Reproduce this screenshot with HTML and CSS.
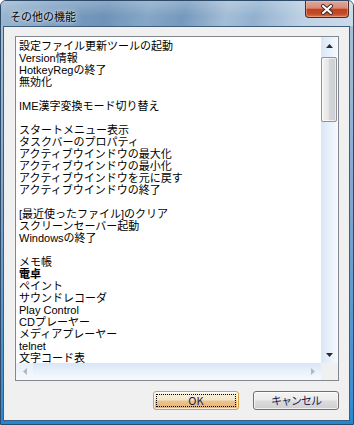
FILE: index.html
```html
<!DOCTYPE html>
<html lang="ja">
<head>
    <meta charset="UTF-8">
    <meta name="viewport" content="width=device-width, initial-scale=1.0">
    <title>その他の機能</title>
    <link rel="stylesheet" href="styles.css">
</head>
<body>
    <div class="window">
        <div class="titlebar">
            <span class="title">その他の機能</span>
            <div class="close-btn">
                <svg width="14" height="11" viewBox="0 0 14 11">
                    <path d="M3 2 L11 9 M11 2 L3 9" stroke="#3a2a2a" stroke-width="4" stroke-linecap="round"/>
                    <path d="M3 2 L11 9 M11 2 L3 9" stroke="#fff" stroke-width="2.2" stroke-linecap="round"/>
                </svg>
            </div>
        </div>

        <div class="client">
            <div class="listbox">
                <ul class="items">
                    <li>設定ファイル更新ツールの起動</li>
                    <li>Version情報</li>
                    <li>HotkeyRegの終了</li>
                    <li>無効化</li>
                    <li></li>
                    <li>IME漢字変換モード切り替え</li>
                    <li></li>
                    <li>スタートメニュー表示</li>
                    <li>タスクバーのプロパティ</li>
                    <li>アクティブウインドウの最大化</li>
                    <li>アクティブウインドウの最小化</li>
                    <li>アクティブウインドウを元に戻す</li>
                    <li>アクティブウインドウの終了</li>
                    <li></li>
                    <li>[最近使ったファイル]のクリア</li>
                    <li>スクリーンセーバー起動</li>
                    <li>Windowsの終了</li>
                    <li></li>
                    <li>メモ帳</li>
                    <li class="bold">電卓</li>
                    <li>ペイント</li>
                    <li>サウンドレコーダ</li>
                    <li class="smooth">Play Control</li>
                    <li class="smooth">CDプレーヤー</li>
                    <li class="smooth">メディアプレーヤー</li>
                    <li class="smooth">telnet</li>
                    <li class="smooth">文字コード表</li>
                </ul>

                <div class="vscroll">
                    <div class="arrow">
                        <svg width="7" height="4" viewBox="0 0 7 4"><polygon points="0,4 3.5,0 7,4" fill="#2b2b2b"/></svg>
                    </div>
                    <div class="track">
                        <div class="thumb"></div>
                    </div>
                    <div class="arrow">
                        <svg width="7" height="4" viewBox="0 0 7 4"><polygon points="0,0 7,0 3.5,4" fill="#2b2b2b"/></svg>
                    </div>
                </div>

                <div class="hscroll">
                    <div class="arrow light">
                        <svg width="4" height="7" viewBox="0 0 4 7"><polygon points="4,0 4,7 0,3.5" fill="#b4b8bd"/></svg>
                    </div>
                    <div class="htrack"></div>
                    <div class="arrow">
                        <svg width="4" height="7" viewBox="0 0 4 7"><polygon points="0,0 4,3.5 0,7" fill="#b4b8bd"/></svg>
                    </div>
                </div>

                <div class="corner"></div>
            </div>

            <div class="buttons">
                <button class="btn btn-default">OK</button>
                <button class="btn">キャンセル</button>
            </div>
        </div>
    </div>
</body>
</html>
```

FILE: styles.css
```css
* {
    box-sizing: border-box;
}

body {
    margin: 0;
    background: #fff;
    font-family: "Noto Sans CJK JP", sans-serif;
}

.window {
    width: 354px;
    height: 425px;
    display: flex;
    flex-direction: column;
    border: 1px solid #2d4a68;
    border-radius: 6px 6px 0 0;
    background: linear-gradient(to bottom, #a9c3dc 0%, #7ea5cb 50%, #3d8ccf 94%, #1f87d6 100%);
}

.titlebar {
    height: 25px;
    display: flex;
    align-items: flex-start;
    padding: 0 4px 0 9px;
    border-radius: 5px 5px 0 0;
    background:
        linear-gradient(to bottom, rgba(255, 255, 255, 0.22), rgba(255, 255, 255, 0) 60%),
        linear-gradient(105deg, #9bb7d2 0%, #7a9dc1 18%, #6e93b8 30%, #86a7c7 42%, #7599bd 52%, #a3bdd6 64%, #92b1cf 72%, #bfd2e4 86%, #cbdbea 100%);
}

.title {
    margin-top: 8px;
    font-size: 11px;
    line-height: 14px;
    color: #000;
    text-shadow: 0 0 6px rgba(255, 255, 255, 0.9), 0 0 2px rgba(255, 255, 255, 0.7);
}

.close-btn {
    margin-left: auto;
    width: 44px;
    height: 17px;
    display: flex;
    align-items: center;
    justify-content: center;
    border: 1px solid #4e2b25;
    border-top: none;
    border-radius: 0 0 4px 4px;
    background: linear-gradient(to bottom, #e3a998 0%, #d78a75 45%, #c2401f 52%, #c54b28 80%, #d97650 100%);
    box-shadow: inset 0 0 0 1px rgba(255, 220, 200, 0.35);
}

.client {
    flex: 1;
    display: flex;
    flex-direction: column;
    gap: 10px;
    margin: 0 3px 3px 2px;
    padding: 9px 10px 10px 11px;
    border: 1px solid #3f5d7d;
    background: #f0f0f0;
}

.listbox {
    width: 324px;
    height: 345px;
    display: grid;
    grid-template-columns: 1fr 17px;
    grid-template-rows: 1fr 17px;
    border: 1px solid #828790;
    background: #fff;
}

.items {
    margin: 0;
    padding: 3px 0 0 3px;
    list-style: none;
    overflow: hidden;
    font-family: "Liberation Sans", "Noto Sans CJK JP", sans-serif;
    font-size: 11px;
    color: #000;
}

.items li {
    height: 12px;
    line-height: 12px;
    white-space: nowrap;
}

.items .bold {
    font-weight: bold;
}

.vscroll {
    display: flex;
    flex-direction: column;
    background: linear-gradient(to right, #dae6f6 0%, #e8f0fb 50%, #f7fafe 100%);
}

.arrow {
    width: 17px;
    height: 17px;
    display: flex;
    align-items: center;
    justify-content: center;
    flex-shrink: 0;
}

.arrow svg {
    display: block;
}

.track {
    flex: 1;
    padding: 3px 1px 0 0;
}

.thumb {
    height: 65px;
    border: 1px solid #8f9296;
    border-radius: 2px;
    background: linear-gradient(to right, #f4f4f4 0%, #e6e6e6 45%, #d2d5d9 55%, #cbced2 100%);
    box-shadow: inset 0 0 0 1px rgba(255, 255, 255, 0.6);
}

.hscroll {
    display: flex;
    background: linear-gradient(to bottom, #d9e6f7 0%, #e9f1fb 50%, #f8fbff 100%);
}

.hscroll .light {
    background: linear-gradient(to bottom, #e8f0fb 0%, #f6f9fe 100%);
}

.htrack {
    flex: 1;
}

.corner {
    background: #f0f0f0;
}

.buttons {
    display: flex;
    justify-content: flex-end;
    gap: 14px;
}

.btn {
    width: 86px;
    height: 19px;
    padding: 0;
    border: 1px solid #707070;
    border-radius: 3px;
    background: linear-gradient(to bottom, #f4f4f4 0%, #ebebeb 48%, #dcdcdc 52%, #cfcfcf 100%);
    box-shadow: inset 0 0 0 1px rgba(255, 255, 255, 0.7);
    font-family: "Noto Sans CJK JP", sans-serif;
    font-size: 11px;
    line-height: 17px;
    letter-spacing: -1px;
    color: #1c1c4c;
}

.btn-default {
    border-color: #d9a23f;
    background: linear-gradient(to bottom, #fbf4e4 0%, #f3e5c6 48%, #e9c591 52%, #e6b273 100%);
    outline: 1px dotted #000;
    outline-offset: -4px;
    letter-spacing: 0;
}
```
